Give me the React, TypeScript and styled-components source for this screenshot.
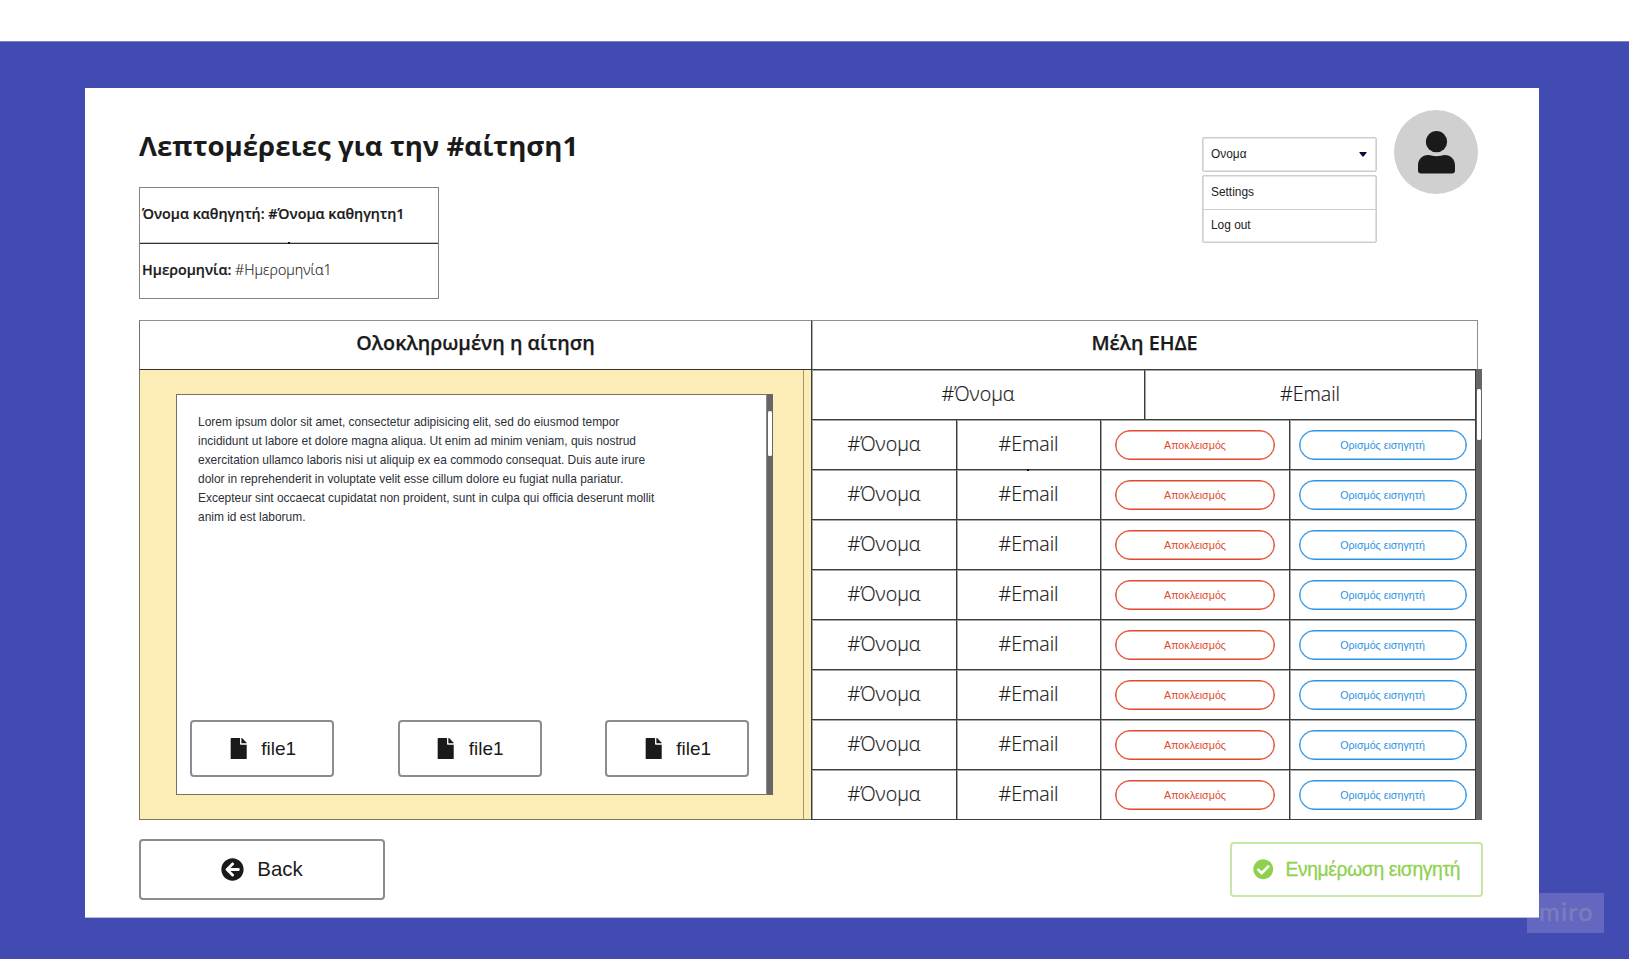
import React from "react";
import styled, { createGlobalStyle } from "styled-components";
import { FaArrowCircleLeft, FaCheckCircle, FaFile } from "react-icons/fa";

const GlobalStyle = createGlobalStyle`
  *, *::before, *::after { box-sizing: border-box; }
  body { margin: 0; background: #fff; }
`;

const sans = `"Liberation Sans", Arial, sans-serif`;
const humanist = `"Open Sans", "Noto Sans", sans-serif`;
const ink = "#1a1a1a";

const Page = styled.div`
  position: relative;
  width: 1629px;
  height: 959px;
  padding-top: 41px;
  overflow: hidden;
  background: #fff;
  color: ${ink};
  font-family: ${sans};
`;

const Backdrop = styled.main`
  height: 918px;
  padding: 46px 90px 0 85px;
  border-top: 1px solid #7f83b5;
  background: #424bb2;
`;

const Card = styled.section`
  position: relative;
  z-index: 1;
  display: flex;
  flex-direction: column;
  height: 830px;
  padding: 0 55px 0 54px;
  border-bottom: 1px solid #b9bbd8;
  background: #fff;
`;

const Watermark = styled.div`
  position: absolute;
  left: 1527px;
  top: 893px;
  width: 77px;
  height: 40px;
  padding-left: 12px;
  background: #6367c0;
  color: #7b7cbc;
  font: 500 25px/37px Lato, sans-serif;
  letter-spacing: 1.3px;
  -webkit-text-stroke: 0.4px #7b7cbc;
`;

const Header = styled.header`
  display: flex;
  justify-content: space-between;
  height: 232px;
`;

const Title = styled.h1`
  margin: 37px 0 22px;
  font: 700 27.6px/40px ${humanist};
  white-space: nowrap;
`;

const InfoBox = styled.dl`
  width: 300px;
  margin: 0;
  border: 1px solid #858585;
`;

const InfoRow = styled.div`
  display: flex;
  align-items: center;
  height: 55px;
  padding: 0 0 3px 2px;
  font: 300 14.3px/20px ${humanist};
  white-space: pre;
  -webkit-text-stroke: 0.15px ${ink};

  & + & {
    position: relative;
    border-top: 1px solid #333;
    box-shadow: 0 -1px 0 #c4c4c4;
  }
`;

const Strong = styled.span`
  font-weight: 600;
  -webkit-text-stroke: 0.2px ${ink};
`;

const Nub = styled.i<{ $left: number; $top: number }>`
  position: absolute;
  left: ${(p) => p.$left}px;
  top: ${(p) => p.$top}px;
  width: 2px;
  height: 2px;
  background: #111;
`;

const User = styled.div`
  display: flex;
  gap: 17px;
  padding: 22px 6px 0 0;
`;

const Dropdown = styled.div`
  width: 175px;
  padding-top: 27px;
  color: #222;
  font: 11.9px/16px ${sans};
`;

const Select = styled.div`
  display: flex;
  align-items: center;
  justify-content: space-between;
  height: 35px;
  margin-bottom: 3px;
  padding: 0 9px 1px 8px;
  border: 1px solid #cdcdcd;
  border-radius: 2px;
  box-shadow: inset 0 0 0 0.6px #cdcdcd;
`;

const Menu = styled.div`
  height: 68px;
  border: 1px solid #cdcdcd;
  border-radius: 2px;
  box-shadow: inset 0 0 0 0.6px #cdcdcd;
`;

const MenuItem = styled.div`
  display: flex;
  align-items: center;
  height: 33px;
  padding: 0 8px 1px;

  & + & {
    padding-bottom: 2px;
    border-top: 1px solid #cdcdcd;
  }
`;

const Avatar = styled.div`
  display: flex;
  justify-content: center;
  width: 84px;
  height: 84px;
  padding-top: 21px;
  border-radius: 50%;
  background: #d0d0d0;
`;

const Board = styled.div`
  display: flex;
  height: 500px;
`;

const Pane = styled.section<{ $width: number }>`
  display: flex;
  flex-direction: column;
  flex: none;
  width: ${(p) => p.$width}px;
`;

const PaneTitle = styled.h2<{ $width: number; $last?: boolean }>`
  display: flex;
  align-items: center;
  justify-content: center;
  flex: none;
  width: ${(p) => p.$width}px;
  height: 49px;
  margin: 0;
  padding-bottom: 5px;
  border: solid #8f8f8f;
  border-width: 1px ${(p) => (p.$last ? 1 : 0)}px 0 1px;
  border-left-color: ${(p) => (p.$last ? "#3c3c3c" : "#707070")};
  box-shadow: ${(p) => (p.$last ? "inset 1px 0 0 #b0b0b0" : "none")};
  font: 600 19.7px/28px ${humanist};
  -webkit-text-stroke: 0.25px ${ink};
`;

const Tray = styled.div`
  display: flex;
  height: 451px;
  border: 1px solid #7b755f;
  border-top-color: #333;
  border-right: 0;
  background: #fcecb6;
`;

const TrayMain = styled.div`
  width: 664px;
  padding: 24px 0 0 36px;
  border-right: 1px solid #a3976f;
`;

const Doc = styled.div`
  display: flex;
  width: 597px;
  height: 401px;
`;

const DocBody = styled.article`
  display: flex;
  flex-direction: column;
  justify-content: space-between;
  width: 591px;
  padding: 18px 17px 17px 13px;
  border: 1px solid #77725f;
  border-right-color: #8b8b8b;
  background: #fff;
`;

const Lorem = styled.p`
  width: 462px;
  margin: 0 0 0 8px;
  color: #2c3038;
  font: 11.95px/19.07px ${sans};
`;

const Files = styled.div`
  display: flex;
  justify-content: space-between;
`;

const Button = styled.button<{ $w: number; $h: number; $size: number; $gap: number }>`
  display: flex;
  align-items: center;
  justify-content: center;
  gap: ${(p) => p.$gap}px;
  width: ${(p) => p.$w}px;
  height: ${(p) => p.$h}px;
  padding: 0;
  border: 2px solid #8c8c8c;
  border-radius: 4px;
  background: #fff;
  color: ${ink};
  font: ${(p) => p.$size}px/24px ${sans};
  white-space: nowrap;
`;

const BackButton = styled(Button)`
  padding-bottom: 1px;
`;

const ConfirmButton = styled(Button)`
  margin-top: 3px;
  border-color: #c6e7a6;
  color: #8fd14f;
  letter-spacing: -0.37px;
  -webkit-text-stroke: 0.3px #8fd14f;

  svg {
    stroke: none;
  }
`;

const Scrollbar = styled.div<{ $offset: number }>`
  width: 6px;
  padding: ${(p) => p.$offset}px 1px 0;
  background: #666;
`;

const Thumb = styled.div<{ $length: number }>`
  height: ${(p) => p.$length}px;
  border-radius: 1.5px;
  background: #fff;
`;

const MembersBody = styled.div`
  display: flex;
  height: 451px;
`;

const Members = styled.div`
  position: relative;
  width: 665px;
  border-right: 1px solid #3c3c3c;
  border-bottom: 1px solid #3c3c3c;
`;

const MemberRow = styled.div<{ $columns: string }>`
  display: grid;
  grid-template-columns: ${(p) => p.$columns};
  height: 50px;
`;

const Cell = styled.div`
  display: flex;
  align-items: center;
  justify-content: center;
  border: solid #3c3c3c;
  border-width: 1px 0 0 1px;
  box-shadow: inset 1px 1px 0 #a6a6a6;
`;

const TextCell = styled(Cell)`
  padding-bottom: 2px;
  font: 300 19.6px/28px ${humanist};
  -webkit-text-stroke: 0.2px ${ink};
`;

const Pill = styled.button<{ $w: number; $color: string }>`
  width: ${(p) => p.$w}px;
  height: 30px;
  margin-top: 1px;
  padding: 0;
  border: 1px solid ${(p) => p.$color};
  border-radius: 15px;
  box-shadow: inset 0 0 0 0.5px ${(p) => p.$color};
  background: #fff;
  color: ${(p) => p.$color};
  font: 10.7px/14px ${sans};
`;

const Footer = styled.footer`
  display: flex;
  align-items: flex-start;
  justify-content: space-between;
  padding-top: 19px;
  width: 1344px;
`;

const Caret = () => (
  <svg width="8" height="5" viewBox="0 0 8 5">
    <path d="M.6 0h6.8q.5.5 0 1L4.5 4.6q-.5.4-1 0L.6 1q-.5-.5 0-1z" fill="#0a0a3c" />
  </svg>
);

const Person = () => (
  <svg width="37" height="43" viewBox="0 0 37 43" fill={ink}>
    <circle cx="18.5" cy="10.7" r="10.6" />
    <path d="M0 34.5C0 28.2 4.2 24 10.2 24c2.8 0 5 1.3 8.3 1.3s5.5-1.3 8.3-1.3C32.800 24 37 28.200 37 34.500V39.500q0 3-3 3H3q-3 0-3-3z" />
  </svg>
);

const files = ["file1", "file1", "file1"];
const members = Array.from({ length: 8 }, (_, id) => ({ id, name: "#Όνομα", email: "#Email" }));

export default function App() {
  return (
    <Page>
      <GlobalStyle />
      <Backdrop>
        <Card>
          <Header>
            <div>
              <Title>Λεπτομέρειες για την #αίτηση1</Title>
              <InfoBox>
                <InfoRow>
                  <Strong>Όνομα καθηγητή: #Όνομα καθηγητη1</Strong>
                </InfoRow>
                <InfoRow>
                  <Nub $left={148} $top={-2} />
                  <Strong>Ημερομηνία: </Strong>
                  <span>#Ημερομηνία1</span>
                </InfoRow>
              </InfoBox>
            </div>
            <User>
              <Dropdown>
                <Select>
                  Ονομα
                  <Caret />
                </Select>
                <Menu>
                  <MenuItem>Settings</MenuItem>
                  <MenuItem>Log out</MenuItem>
                </Menu>
              </Dropdown>
              <Avatar>
                <Person />
              </Avatar>
            </User>
          </Header>

          <Board>
            <Pane $width={672}>
              <PaneTitle $width={672}>Ολοκληρωμένη η αίτηση</PaneTitle>
              <Tray>
                <TrayMain>
                  <Doc>
                    <DocBody>
                      <Lorem>
                        Lorem ipsum dolor sit amet, consectetur adipisicing elit, sed do eiusmod tempor
                        incididunt ut labore et dolore magna aliqua. Ut enim ad minim veniam, quis nostrud
                        exercitation ullamco laboris nisi ut aliquip ex ea commodo consequat. Duis aute irure
                        dolor in reprehenderit in voluptate velit esse cillum dolore eu fugiat nulla pariatur.
                        Excepteur sint occaecat cupidatat non proident, sunt in culpa qui officia deserunt mollit
                        anim id est laborum.
                      </Lorem>
                      <Files>
                        {files.map((name, i) => (
                          <Button key={i} $w={144} $h={57} $size={19} $gap={12}>
                            <FaFile size={21.4} />
                            {name}
                          </Button>
                        ))}
                      </Files>
                    </DocBody>
                    <Scrollbar $offset={17}>
                      <Thumb $length={45} />
                    </Scrollbar>
                  </Doc>
                </TrayMain>
              </Tray>
            </Pane>

            <Pane $width={671}>
              <PaneTitle $width={667} $last>
                Μέλη ΕΗΔΕ
              </PaneTitle>
              <MembersBody>
                <Members>
                  <MemberRow $columns="333px 1fr">
                    <TextCell>#Όνομα</TextCell>
                    <TextCell>#Email</TextCell>
                  </MemberRow>
                  {members.map((m) => (
                    <MemberRow key={m.id} $columns="145px 144px 189px 1fr">
                      <TextCell>{m.name}</TextCell>
                      <TextCell>{m.email}</TextCell>
                      <Cell>
                        <Pill $w={160} $color="#e0492b">Αποκλεισμός</Pill>
                      </Cell>
                      <Cell>
                        <Pill $w={168} $color="#2d93e2">Ορισμός εισηγητή</Pill>
                      </Cell>
                    </MemberRow>
                  ))}
                  <Nub $left={216} $top={100} />
                </Members>
                <Scrollbar $offset={20}>
                  <Thumb $length={51} />
                </Scrollbar>
              </MembersBody>
            </Pane>
          </Board>

          <Footer>
            <BackButton $w={246} $h={61} $size={20.4} $gap={13}>
              <FaArrowCircleLeft size={23} />
              Back
            </BackButton>
            <ConfirmButton $w={253} $h={55} $size={19.3} $gap={12}>
              <FaCheckCircle size={20.5} />
              Ενημέρωση εισηγητή
            </ConfirmButton>
          </Footer>
        </Card>
      </Backdrop>
      <Watermark>miro</Watermark>
    </Page>
  );
}
